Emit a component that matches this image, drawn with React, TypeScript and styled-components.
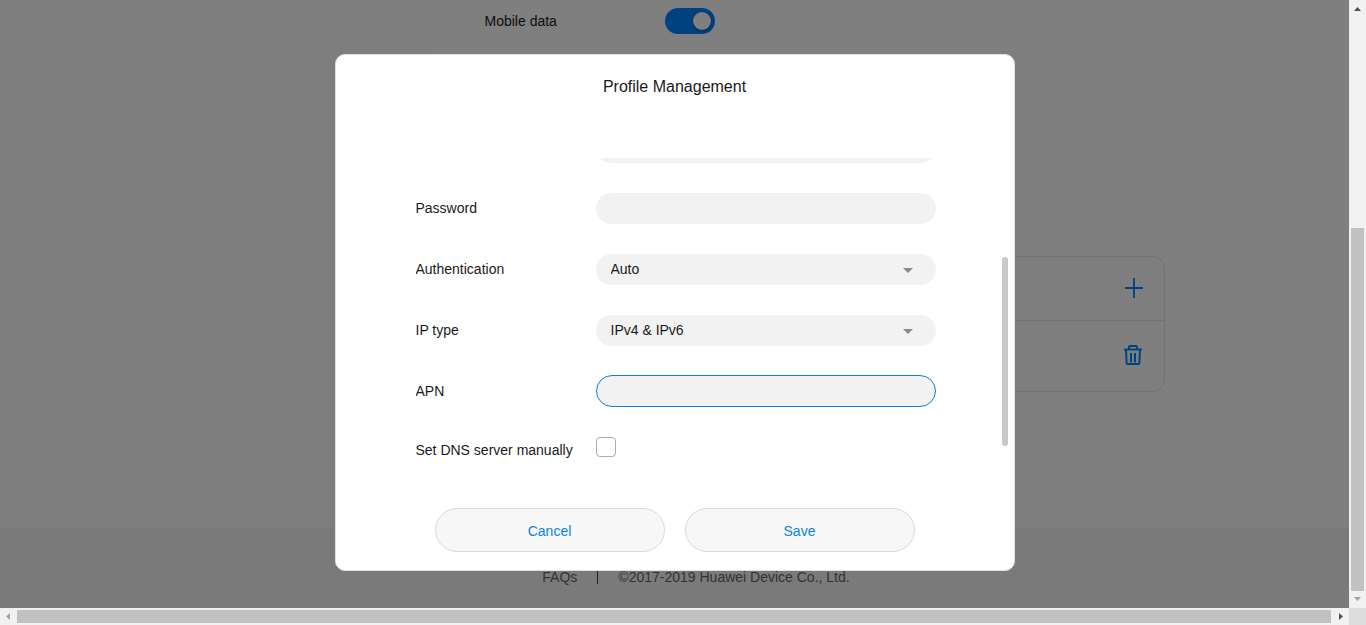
import React from "react";
import styled, { createGlobalStyle, css } from "styled-components";

const GlobalStyle = createGlobalStyle`
  *, *::before, *::after { box-sizing: border-box; }
  body {
    margin: 0;
    font-family: Arial, "Liberation Sans", sans-serif;
    font-size: 14px;
    line-height: 20px;
    color: #1a1a1a;
  }
  button, input, select { font: inherit; }
`;

const Shell = styled.div`
  display: grid;
  grid-template-columns: minmax(0, 1fr) 17px;
  grid-template-rows: minmax(0, 1fr) 17px;
  height: 100vh;
`;

const Viewport = styled.div`
  position: relative;
  display: flex;
  flex-direction: column;
  overflow: hidden;
  background: #fff;
`;

const Main = styled.main`
  flex: 1;
  display: flex;
  width: 1000px;
  max-width: 100%;
  margin: 0 auto;
`;

const SideMenu = styled.nav`
  flex: 0 0 259px;
  background: #fcfcfc;
`;

const Content = styled.section`
  flex: 1;
  display: flex;
  flex-direction: column;
  gap: 222px;
  padding: 8px 10px 0 51px;
`;

const SettingRow = styled.div`
  display: flex;
  align-items: center;
  height: 26px;
`;

const SettingName = styled.span`
  width: 180px;
`;

const Switch = styled.button`
  display: flex;
  align-items: center;
  justify-content: flex-end;
  width: 50px;
  height: 26px;
  padding: 0 4px;
  border: 0;
  border-radius: 13px;
  background: #0084ff;
`;

const Knob = styled.span`
  width: 18px;
  height: 18px;
  border-radius: 50%;
  background: #fff;
  box-shadow: 0 1px 3px rgba(0, 0, 0, 0.4);
`;

const ProfileCard = styled.div`
  border: 1px solid #e6e6e6;
  border-radius: 12px;
`;

const ProfileRow = styled.div<{ $tall?: boolean }>`
  display: flex;
  align-items: center;
  justify-content: flex-end;
  height: ${(p) => (p.$tall ? 71 : 63)}px;
  padding: 0 20px 2px 0;
  border-top: ${(p) => (p.$tall ? "1px solid #e6e6e6" : "0")};
`;

const IconButton = styled.button`
  display: flex;
  padding: 0;
  border: 0;
  background: none;
  color: #0084ff;
`;

const Footer = styled.footer`
  display: flex;
  align-items: center;
  justify-content: center;
  gap: 20px;
  height: 80px;
  padding: 17px 0 0 43px;
  background: #f4f4f4;
  color: #666;
`;

const FooterLink = styled.a`
  color: inherit;
  text-decoration: none;
`;

const Separator = styled.span`
  width: 1px;
  height: 14px;
  background: #444;
`;

const Overlay = styled.div`
  position: absolute;
  inset: 0;
  display: flex;
  align-items: flex-start;
  justify-content: center;
  padding-top: 54px;
  background: rgba(0, 0, 0, 0.5);
`;

const Dialog = styled.div`
  width: 680px;
  max-width: 100%;
  padding-bottom: 18px;
  border: 1px solid #e0e0e0;
  border-radius: 10px;
  background: #fff;
`;

const DialogTitle = styled.h2`
  margin: 0;
  padding: 22px 0 61px;
  font-size: 16px;
  font-weight: 400;
  line-height: 20px;
  text-align: center;
`;

const DialogBody = styled.div`
  display: flex;
  height: 314px;
  padding: 0 6px 0 80px;
`;

const Form = styled.form`
  flex: 1;
  display: flex;
  flex-direction: column;
  justify-content: flex-end;
  overflow: hidden;
`;

const ScrollTrack = styled.div`
  width: 6px;
  padding-top: 99px;
`;

const ScrollThumb = styled.div`
  height: 189px;
  border-radius: 3px;
  background: #c9c9c9;
`;

const Field = styled.div<{ $compact?: boolean }>`
  flex: none;
  display: flex;
  align-items: center;
  height: ${(p) => (p.$compact ? 50 : 61)}px;
`;

const FieldLabel = styled.label<{ $low?: boolean }>`
  width: 180px;
  padding: ${(p) => (p.$low ? "6px 0 0" : "0 0 2px")};
`;

const pill = css`
  width: 340px;
  height: 31px;
  padding: 0 15px;
  border: 0;
  border-radius: 16px;
  outline: 0;
  background: #f2f2f2;
  color: #1a1a1a;
`;

const TextInput = styled.input<{ $focused?: boolean }>`
  ${pill}
  ${(p) =>
    p.$focused &&
    css`
      height: 32px;
      margin: 0 0 1px;
      border: 1px solid #0a84dc;
    `}
`;

const SelectBox = styled.div`
  display: grid;
  align-items: center;

  & > * {
    grid-area: 1 / 1;
  }
  & > svg {
    justify-self: end;
    margin: 2px 23px 0 0;
    pointer-events: none;
  }
`;

const Select = styled.select`
  ${pill}
  appearance: none;
  padding-bottom: 2px;
`;

const Checkbox = styled.input`
  appearance: none;
  width: 20px;
  height: 20px;
  margin: 0;
  border: 1px solid #adadad;
  border-radius: 4px;
  background: #fff;
`;

const Actions = styled.div`
  display: flex;
  justify-content: center;
  gap: 20px;
  margin-top: 36px;
`;

const ActionButton = styled.button`
  width: 230px;
  height: 44px;
  padding: 2px 0 0;
  border: 1px solid #dadada;
  border-radius: 22px;
  background: #f7f7f7;
  color: #0a84dc;
`;

const VerticalBar = styled.div`
  display: flex;
  flex-direction: column;
  align-items: center;
  background: #f1f1f1;
`;

const HorizontalBar = styled.div`
  display: flex;
  align-items: center;
  background: #f1f1f1;
`;

const BarArrow = styled.svg`
  flex: none;
  display: block;
  width: 17px;
  height: 17px;
`;

const VerticalTrack = styled.div`
  flex: 1;
  display: grid;
  grid-template-rows: 211fr 363fr;
  width: 13px;
`;

const VerticalThumb = styled.div`
  grid-row: 2;
  background: #c1c1c1;
`;

const HorizontalThumb = styled.div`
  flex: 1;
  height: 13px;
  margin-right: 1px;
  background: #c1c1c1;
`;

const Corner = styled.div`
  background: #dcdcdc;
`;

function Caret() {
  return (
    <svg width="10" height="5" viewBox="0 0 10 5" aria-hidden="true">
      <path d="M0 0h10L5 5z" fill="#8a8a8a" />
    </svg>
  );
}

function PlusIcon() {
  return (
    <svg width="20" height="20" viewBox="0 0 20 20" aria-hidden="true">
      <path d="M10 0v20M1 10h18" stroke="currentColor" strokeWidth="1.800" fill="none" />
    </svg>
  );
}

function TrashIcon() {
  return (
    <svg width="22" height="22" viewBox="0 0 22 22" aria-hidden="true" fill="none" stroke="currentColor" strokeWidth="2">
      <path d="M2 5.500h18" />
      <path d="M7 5V3q0-1 1-1h6q1 0 1 1v2" />
      <path d="M4 5.500l.600 13.500q.1 1 1.100 1h10.600q1 0 1.100-1L18 5.500" />
      <path d="M9 9v9.500M13 9v9.500" />
    </svg>
  );
}

function SelectField({ id, label, value }: { id: string; label: string; value: string }) {
  return (
    <Field>
      <FieldLabel htmlFor={id}>{label}</FieldLabel>
      <SelectBox>
        <Select id={id} defaultValue={value}>
          <option>{value}</option>
        </Select>
        <Caret />
      </SelectBox>
    </Field>
  );
}

export default function App() {
  return (
    <>
      <GlobalStyle />
      <Shell>
        <Viewport>
          <Main>
            <SideMenu />
            <Content>
              <SettingRow>
                <SettingName id="mobile-data">Mobile data</SettingName>
                <Switch type="button" role="switch" aria-checked="true" aria-labelledby="mobile-data">
                  <Knob />
                </Switch>
              </SettingRow>
              <ProfileCard>
                <ProfileRow>
                  <IconButton type="button" aria-label="Add profile">
                    <PlusIcon />
                  </IconButton>
                </ProfileRow>
                <ProfileRow $tall>
                  <IconButton type="button" aria-label="Delete profile">
                    <TrashIcon />
                  </IconButton>
                </ProfileRow>
              </ProfileCard>
            </Content>
          </Main>
          <Footer>
            <FooterLink href="#faqs">FAQs</FooterLink>
            <Separator />
            <span>©2017-2019 Huawei Device Co., Ltd.</span>
          </Footer>

          <Overlay>
            <Dialog role="dialog" aria-modal="true" aria-labelledby="dialog-title">
              <DialogTitle id="dialog-title">Profile Management</DialogTitle>
              <DialogBody>
                <Form id="profile-form">
                  <Field>
                    <FieldLabel htmlFor="user-name" />
                    <TextInput id="user-name" aria-label="User name" />
                  </Field>
                  <Field>
                    <FieldLabel htmlFor="password">Password</FieldLabel>
                    <TextInput id="password" type="password" />
                  </Field>
                  <SelectField id="auth" label="Authentication" value="Auto" />
                  <SelectField id="ip-type" label="IP type" value="IPv4 & IPv6" />
                  <Field>
                    <FieldLabel htmlFor="apn">APN</FieldLabel>
                    <TextInput id="apn" $focused />
                  </Field>
                  <Field $compact>
                    <FieldLabel htmlFor="dns" $low>
                      Set DNS server manually
                    </FieldLabel>
                    <Checkbox id="dns" type="checkbox" />
                  </Field>
                </Form>
                <ScrollTrack>
                  <ScrollThumb />
                </ScrollTrack>
              </DialogBody>
              <Actions>
                <ActionButton type="button">Cancel</ActionButton>
                <ActionButton type="submit" form="profile-form">
                  Save
                </ActionButton>
              </Actions>
            </Dialog>
          </Overlay>
        </Viewport>

        <VerticalBar>
          <BarArrow viewBox="0 0 17 17" aria-hidden="true">
            <path d="M5 11h7L8.500 7z" fill="#505050" />
          </BarArrow>
          <VerticalTrack>
            <VerticalThumb />
          </VerticalTrack>
          <BarArrow viewBox="0 0 17 17" aria-hidden="true">
            <path d="M5 6h7l-3.500 4z" fill="#a3a3a3" />
          </BarArrow>
        </VerticalBar>
        <HorizontalBar>
          <BarArrow viewBox="0 0 17 17" aria-hidden="true">
            <path d="M10 5v7L6 8.500z" fill="#a3a3a3" />
          </BarArrow>
          <HorizontalThumb />
          <BarArrow viewBox="0 0 17 17" aria-hidden="true">
            <path d="M7 5v7l4-3.500z" fill="#505050" />
          </BarArrow>
        </HorizontalBar>
        <Corner />
      </Shell>
    </>
  );
}
